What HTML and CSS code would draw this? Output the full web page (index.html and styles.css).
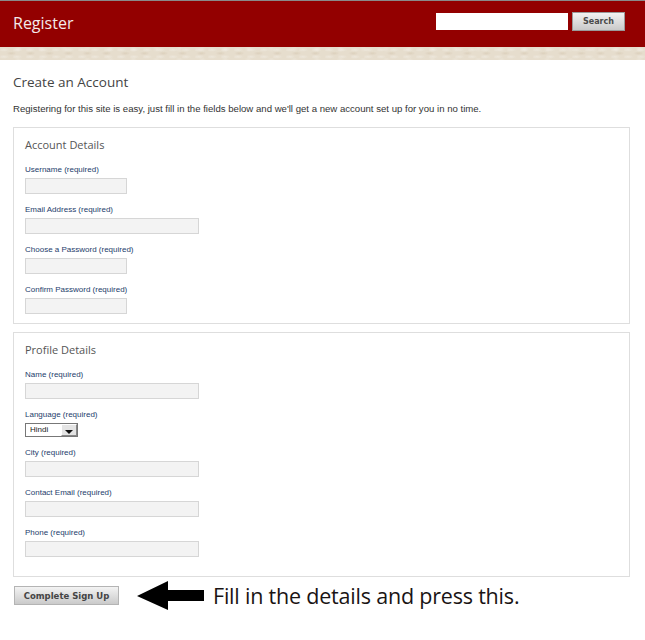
FILE: index.html
```html
<!DOCTYPE html>
<html lang="en">
<head>
  <meta charset="UTF-8">
  <title>Register</title>
  <link rel="stylesheet" href="styles.css">
</head>
<body>
  <div class="header">
    <div class="site-title">Register</div>
    <form class="search">
      <input type="text" class="search-box">
      <button type="button" class="search-btn">Search</button>
    </form>
  </div>
  <div class="texture"></div>

  <div class="content">
    <h1>Create an Account</h1>
    <p class="intro">Registering for this site is easy, just fill in the fields below and we'll get a new account set up for you in no time.</p>

    <div class="box">
      <h2>Account Details</h2>
      <div class="field">
        <label>Username (required)</label>
        <input type="text" class="short">
      </div>
      <div class="field">
        <label>Email Address (required)</label>
        <input type="text" class="long">
      </div>
      <div class="field">
        <label>Choose a Password (required)</label>
        <input type="password" class="short">
      </div>
      <div class="field">
        <label>Confirm Password (required)</label>
        <input type="password" class="short">
      </div>
    </div>

    <div class="box profile">
      <h2>Profile Details</h2>
      <div class="field">
        <label>Name (required)</label>
        <input type="text" class="long">
      </div>
      <div class="field">
        <label>Language (required)</label>
        <div class="select">
          <span class="select-value">Hindi</span>
          <span class="select-arrow"><span class="tri"></span></span>
        </div>
      </div>
      <div class="field">
        <label>City (required)</label>
        <input type="text" class="long">
      </div>
      <div class="field">
        <label>Contact Email (required)</label>
        <input type="text" class="long">
      </div>
      <div class="field">
        <label>Phone (required)</label>
        <input type="text" class="long">
      </div>
    </div>

    <div class="submit-row">
      <button type="button" class="signup">Complete Sign Up</button>
      <svg class="arrow" width="67" height="29" viewBox="0 0 67 29">
        <polygon points="0,15 31,0 31,9 67,9 67,20 31,20 31,29" fill="#000"/>
      </svg>
      <span class="note">Fill in the details and press this.</span>
    </div>
  </div>
</body>
</html>
```

FILE: styles.css
```css
* {
  margin: 0;
  padding: 0;
  box-sizing: border-box;
}

body {
  font-family: "Liberation Sans", Arial, sans-serif;
  font-variant-ligatures: none;
  background-color: #fff;
  color: #333;
}

/* Barra vermelha do topo */
.header {
  border-top: 1px solid #8a8a8a;
  background-color: #930000;
  height: 47px;
  display: flex;
  align-items: center;
  justify-content: space-between;
  padding: 0 20px 0 13px;
}

.site-title {
  font-family: "Open Sans", sans-serif;
  font-size: 16px;
  color: #f4eaea;
  margin-top: -3px;
}

.search {
  display: flex;
  align-items: center;
  gap: 4px;
  margin-top: -5px;
}

.search-box {
  width: 132px;
  height: 17px;
  border: none;
  background: #fff;
}

.search-btn {
  width: 53px;
  height: 19px;
  border: 1px solid #9a9a9a;
  background: linear-gradient(#f2f2f2, #c9c9c9);
  font-family: "DejaVu Sans", sans-serif;
  font-weight: bold;
  font-size: 8px;
  color: #4a4a4a;
}

/* Faixa de papel abaixo do cabeçalho */
.texture {
  height: 13px;
  background-color: #e6ddcd;
  background-image:
    radial-gradient(ellipse 6px 2px at 30% 40%, rgba(255,255,255,0.3), transparent),
    radial-gradient(ellipse 5px 2px at 60% 70%, rgba(190,170,140,0.25), transparent),
    radial-gradient(ellipse 4px 3px at 80% 20%, rgba(255,255,255,0.2), transparent);
  background-size: 13px 7px, 19px 9px, 23px 11px;
}

/* Conteúdo */
.content {
  padding: 13px 15px 0 13px;
}

h1 {
  font-family: "Open Sans", sans-serif;
  font-weight: normal;
  font-size: 13.5px;
  color: #444;
  line-height: 18px;
}

.intro {
  font-size: 9.6px;
  color: #333;
  margin-top: 12px;
  line-height: 12px;
}

.box {
  border: 1px solid #dedede;
  margin-top: 12px;
  padding: 9px 12px 9px 11px;
}

.box.profile {
  margin-top: 8px;
  padding-bottom: 19px;
}

h2 {
  font-family: "Open Sans", sans-serif;
  font-weight: normal;
  font-size: 11px;
  color: #555;
  line-height: 16px;
  margin-bottom: 10px;
}

.field {
  margin-bottom: 9px;
}

.field:last-child {
  margin-bottom: 0;
}

label {
  display: block;
  font-size: 8px;
  color: #1d3d6b;
  line-height: 12px;
  padding-top: 1px;
  margin-bottom: 2px;
}

input.short,
input.long {
  display: block;
  height: 16px;
  border: 1px solid #d6d6d6;
  background-color: #f3f3f3;
}

input.short {
  width: 102px;
}

input.long {
  width: 174px;
}

/* Caixa de seleção */
.select {
  display: flex;
  width: 53px;
  height: 14px;
  border: 1px solid #777;
  background: #fff;
  margin-bottom: 1px;
}

.select-value {
  flex: 1;
  font-size: 8px;
  line-height: 12px;
  color: #222;
  padding-left: 4px;
}

.select-arrow {
  width: 16px;
  border: 1px solid #888;
  border-top-color: #fff;
  border-left-color: #fff;
  background: #e4e4e4;
  display: flex;
  align-items: flex-end;
  justify-content: center;
  padding-bottom: 1px;
}

.tri {
  width: 0;
  height: 0;
  border-left: 4px solid transparent;
  border-right: 4px solid transparent;
  border-top: 4px solid #111;
}

/* Botão final e aviso */
.submit-row {
  display: flex;
  align-items: center;
  margin-top: 4px;
}

.signup {
  width: 105px;
  height: 19px;
  margin-left: 1px;
  border: 1px solid #b4b4b4;
  background: linear-gradient(#f3f3f3, #cacaca);
  font-family: "DejaVu Sans", sans-serif;
  font-weight: bold;
  font-size: 8.5px;
  color: #444;
}

.arrow {
  margin-left: 18px;
}

.note {
  margin-left: 9px;
  font-family: "Open Sans", sans-serif;
  font-size: 21.5px;
  color: #1a1414;
  letter-spacing: -0.2px;
}
```
